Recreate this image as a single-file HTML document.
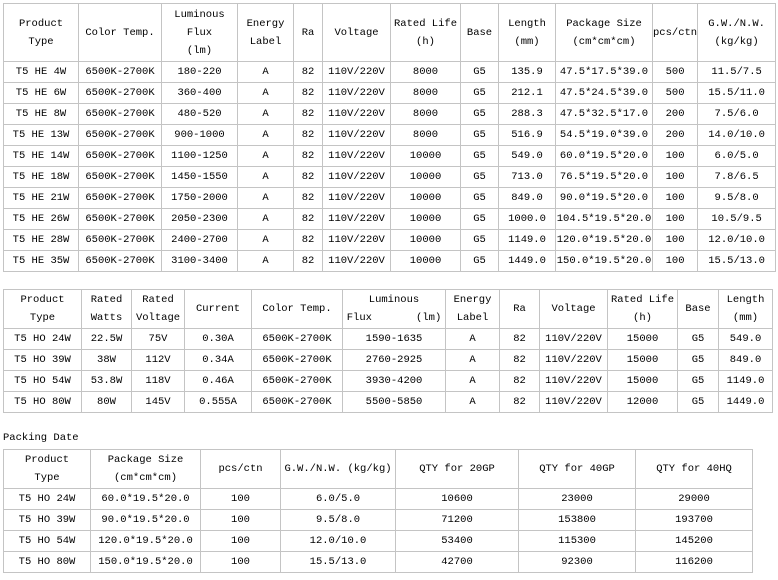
<!DOCTYPE html>
<html><head><meta charset="utf-8"><style>
body{margin:0;width:778px;height:580px;background:#fff;position:relative;overflow:hidden;font-family:"Liberation Mono","Noto Serif CJK SC",monospace;font-size:10.5px;color:#000}
table{position:absolute;border-collapse:collapse;table-layout:fixed}
td{border:1px solid #c4c4c4;text-align:center;padding:0;line-height:19px;white-space:nowrap;overflow:hidden}
.h td{line-height:18px}
#t1{left:3px;top:3px}
#t1 tr{height:21px}
#t1 tr.h{height:58px}
#t2{left:3px;top:289px}
#t2 tr{height:21px}
#t2 tr.h{height:39px}
#t3{left:3px;top:449px}
#t3 tr{height:21px}
#t3 tr.h{height:39px}
.pd{position:absolute;left:3px;top:432px;font-size:10.5px}
</style></head><body>
<table id="t1">
<colgroup><col style="width:75px"><col style="width:83px"><col style="width:76px"><col style="width:56px"><col style="width:29px"><col style="width:68px"><col style="width:70px"><col style="width:38px"><col style="width:57px"><col style="width:97px"><col style="width:45px"><col style="width:78px"></colgroup>
<tr class="h"><td>Product<br>Type</td><td>Color Temp.</td><td>Luminous<br>Flux<br>(lm)</td><td>Energy<br>Label</td><td>Ra</td><td>Voltage</td><td>Rated Life<br>(h)</td><td>Base</td><td>Length<br>(mm)</td><td>Package Size<br>(cm*cm*cm)</td><td>pcs/ctn</td><td>G.W./N.W.<br>(kg/kg)</td></tr>
<tr><td>T5 HE 4W</td><td>6500K-2700K</td><td>180-220</td><td>A</td><td>82</td><td>110V/220V</td><td>8000</td><td>G5</td><td>135.9</td><td>47.5*17.5*39.0</td><td>500</td><td>11.5/7.5</td></tr>
<tr><td>T5 HE 6W</td><td>6500K-2700K</td><td>360-400</td><td>A</td><td>82</td><td>110V/220V</td><td>8000</td><td>G5</td><td>212.1</td><td>47.5*24.5*39.0</td><td>500</td><td>15.5/11.0</td></tr>
<tr><td>T5 HE 8W</td><td>6500K-2700K</td><td>480-520</td><td>A</td><td>82</td><td>110V/220V</td><td>8000</td><td>G5</td><td>288.3</td><td>47.5*32.5*17.0</td><td>200</td><td>7.5/6.0</td></tr>
<tr><td>T5 HE 13W</td><td>6500K-2700K</td><td>900-1000</td><td>A</td><td>82</td><td>110V/220V</td><td>8000</td><td>G5</td><td>516.9</td><td>54.5*19.0*39.0</td><td>200</td><td>14.0/10.0</td></tr>
<tr><td>T5 HE 14W</td><td>6500K-2700K</td><td>1100-1250</td><td>A</td><td>82</td><td>110V/220V</td><td>10000</td><td>G5</td><td>549.0</td><td>60.0*19.5*20.0</td><td>100</td><td>6.0/5.0</td></tr>
<tr><td>T5 HE 18W</td><td>6500K-2700K</td><td>1450-1550</td><td>A</td><td>82</td><td>110V/220V</td><td>10000</td><td>G5</td><td>713.0</td><td>76.5*19.5*20.0</td><td>100</td><td>7.8/6.5</td></tr>
<tr><td>T5 HE 21W</td><td>6500K-2700K</td><td>1750-2000</td><td>A</td><td>82</td><td>110V/220V</td><td>10000</td><td>G5</td><td>849.0</td><td>90.0*19.5*20.0</td><td>100</td><td>9.5/8.0</td></tr>
<tr><td>T5 HE 26W</td><td>6500K-2700K</td><td>2050-2300</td><td>A</td><td>82</td><td>110V/220V</td><td>10000</td><td>G5</td><td>1000.0</td><td>104.5*19.5*20.0</td><td>100</td><td>10.5/9.5</td></tr>
<tr><td>T5 HE 28W</td><td>6500K-2700K</td><td>2400-2700</td><td>A</td><td>82</td><td>110V/220V</td><td>10000</td><td>G5</td><td>1149.0</td><td>120.0*19.5*20.0</td><td>100</td><td>12.0/10.0</td></tr>
<tr><td>T5 HE 35W</td><td>6500K-2700K</td><td>3100-3400</td><td>A</td><td>82</td><td>110V/220V</td><td>10000</td><td>G5</td><td>1449.0</td><td>150.0*19.5*20.0</td><td>100</td><td>15.5/13.0</td></tr>
</table>

<table id="t2">
<colgroup><col style="width:78px"><col style="width:50px"><col style="width:53px"><col style="width:67px"><col style="width:91px"><col style="width:103px"><col style="width:54px"><col style="width:40px"><col style="width:68px"><col style="width:70px"><col style="width:41px"><col style="width:54px"></colgroup>
<tr class="h"><td>Product<br>Type</td><td>Rated<br>Watts</td><td>Rated<br>Voltage</td><td>Current</td><td>Color Temp.</td><td>Luminous<br>Flux&nbsp;&nbsp;&nbsp;&nbsp;&nbsp;&nbsp;&nbsp;(lm)</td><td>Energy<br>Label</td><td>Ra</td><td>Voltage</td><td>Rated Life<br>(h)</td><td>Base</td><td>Length<br>(mm)</td></tr>
<tr><td>T5 HO 24W</td><td>22.5W</td><td>75V</td><td>0.30A</td><td>6500K-2700K</td><td>1590-1635</td><td>A</td><td>82</td><td>110V/220V</td><td>15000</td><td>G5</td><td>549.0</td></tr>
<tr><td>T5 HO 39W</td><td>38W</td><td>112V</td><td>0.34A</td><td>6500K-2700K</td><td>2760-2925</td><td>A</td><td>82</td><td>110V/220V</td><td>15000</td><td>G5</td><td>849.0</td></tr>
<tr><td>T5 HO 54W</td><td>53.8W</td><td>118V</td><td>0.46A</td><td>6500K-2700K</td><td>3930-4200</td><td>A</td><td>82</td><td>110V/220V</td><td>15000</td><td>G5</td><td>1149.0</td></tr>
<tr><td>T5 HO 80W</td><td>80W</td><td>145V</td><td>0.555A</td><td>6500K-2700K</td><td>5500-5850</td><td>A</td><td>82</td><td>110V/220V</td><td>12000</td><td>G5</td><td>1449.0</td></tr>
</table>

<div class="pd">Packing Date</div>
<table id="t3">
<colgroup><col style="width:87px"><col style="width:110px"><col style="width:80px"><col style="width:115px"><col style="width:123px"><col style="width:117px"><col style="width:117px"></colgroup>
<tr class="h"><td>Product<br>Type</td><td>Package Size<br>(cm*cm*cm)</td><td>pcs/ctn</td><td>G.W./N.W. (kg/kg)</td><td>QTY for 20GP</td><td>QTY for 40GP</td><td>QTY for 40HQ</td></tr>
<tr><td>T5 HO 24W</td><td>60.0*19.5*20.0</td><td>100</td><td>6.0/5.0</td><td>10600</td><td>23000</td><td>29000</td></tr>
<tr><td>T5 HO 39W</td><td>90.0*19.5*20.0</td><td>100</td><td>9.5/8.0</td><td>71200</td><td>153800</td><td>193700</td></tr>
<tr><td>T5 HO 54W</td><td>120.0*19.5*20.0</td><td>100</td><td>12.0/10.0</td><td>53400</td><td>115300</td><td>145200</td></tr>
<tr><td>T5 HO 80W</td><td>150.0*19.5*20.0</td><td>100</td><td>15.5/13.0</td><td>42700</td><td>92300</td><td>116200</td></tr>
</table>
</body></html>
